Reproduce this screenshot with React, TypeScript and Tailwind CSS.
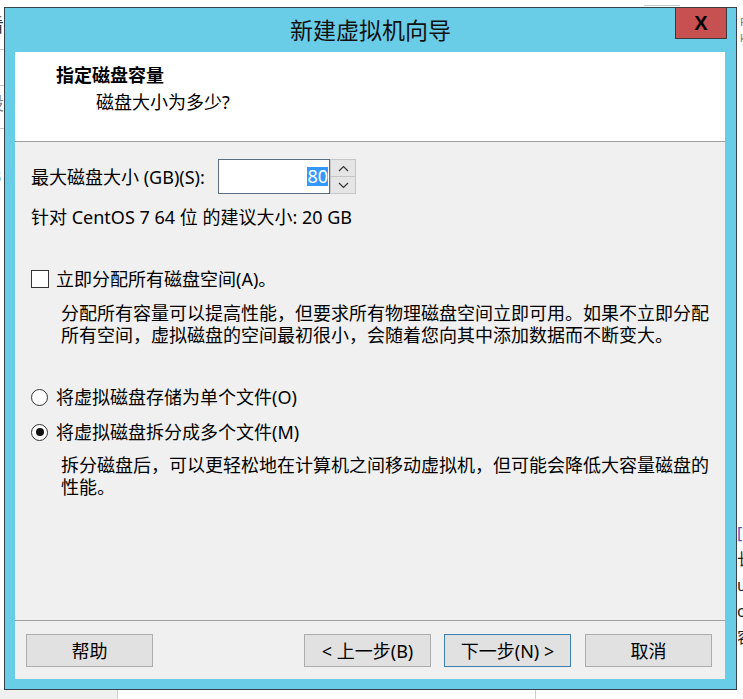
import React from 'react';

const Chevron = ({up}: {up?: boolean}) => (
  <svg width="11" height="7" viewBox="0 0 11 7" fill="none">
    <path
      d={up ? 'M1 6 L5.5 1.5 L10 6' : 'M1 1 L5.5 5.5 L10 1'}
      stroke="#333"
      strokeWidth="1.2"
    />
  </svg>
);

const Btn = ({label, active}: {label: string; active?: boolean}) => (
  <div
    className={`w-[127px] h-[33px] flex items-center justify-center bg-[#e1e1e1] border text-[18px] leading-none ${
      active ? 'border-[#3c7fb1]' : 'border-[#adadad]'
    }`}
  >
    {label}
  </div>
);

export default function App() {
  return (
    <div className="relative w-[743px] h-[699px] overflow-hidden bg-white text-black font-['Noto_Sans','Noto_Sans_CJK_SC',sans-serif]">
      {/* desktop behind the dialog */}
      <div className="absolute left-[-14px] top-[12px] text-[18px] text-[#333]">看</div>
      <div className="absolute left-0 top-[49px] w-[6px] h-px bg-[#c8c8c8]" />
      <div className="absolute left-0 top-[85px] w-[6px] h-px bg-[#c8c8c8]" />
      <div className="absolute left-[-14px] top-[90px] text-[18px] text-[#888]">设</div>
      <div className="absolute left-0 top-[128px] w-[6px] h-px bg-[#c8c8c8]" />
      <div className="absolute left-[-9px] top-[163px] text-[18px] text-[#333]">3</div>
      <div className="absolute left-[644px] top-[5px] w-[36px] h-px bg-[#c0c8d0]" />
      <div className="absolute left-[740px] top-[14px] text-[11px] text-[#777] leading-[16px]">
        P<br />k
      </div>
      <div className="absolute left-[737px] top-[520px] text-[16px] text-[#222] leading-[26px]">
        <span className="text-[#5a4cbb]">[</span>
        <br />长<br />ul<br />or<br />容
      </div>
      <div className="absolute left-0 top-[690px] w-[118px] h-[9px] bg-[#f0f0f0] border-r border-[#cfcfcf]" />
      <div className="absolute left-[535px] top-[690px] w-px h-[9px] bg-[#cfcfcf]" />

      {/* dialog */}
      <div className="absolute left-[4px] top-[7px] w-[733px] h-[683px] border border-[#34434c] bg-[#6acde8] flex flex-col">
        <div className="relative h-[44px] shrink-0 flex items-center justify-center">
          <span className="text-[23px] leading-none text-[#111]">新建虚拟机向导</span>
          <div className="absolute right-[9px] top-[-1px] w-[52px] h-[32px] bg-[#c75050] border border-[#3b3b3b] flex items-center justify-center">
            <span className="font-['Liberation_Sans',sans-serif] font-bold text-[20px] leading-none">X</span>
          </div>
        </div>

        <div className="ml-[10px] mr-[11px] flex-1 flex flex-col bg-[#f0f0f0] text-[18px] leading-[22px]">
          <div className="h-[90px] shrink-0 bg-white border-b border-[#a0a0a0] pt-[12px] pl-[41px]">
            <div className="font-bold">指定磁盘容量</div>
            <div className="pl-[40px] mt-[5px]">磁盘大小为多少?</div>
          </div>

          <div className="flex-1 flex flex-col px-[16px]">
            <div className="mt-[17px] h-[35px] flex items-center">
              <span className="w-[187px]">最大磁盘大小 (GB)(S):</span>
              <div className="w-[112px] h-[35px] border border-[#5b6f80] bg-white flex items-center justify-end pr-[1px]">
                <span className="bg-[#3399ff] text-white leading-[19px]">80</span>
              </div>
              <div className="w-[26px] h-[35px] flex flex-col">
                <div className="flex-1 bg-[#e5e5e5] border border-[#c6c6c6] flex items-center justify-center">
                  <Chevron up />
                </div>
                <div className="flex-1 bg-[#e5e5e5] border border-t-0 border-[#c6c6c6] flex items-center justify-center">
                  <Chevron />
                </div>
              </div>
            </div>

            <div className="mt-[12px]">针对 CentOS 7 64 位 的建议大小: 20 GB</div>

            <div className="mt-[40px] flex items-center">
              <div className="w-[18px] h-[18px] border border-[#333] bg-white" />
              <span className="ml-[7px]">立即分配所有磁盘空间(A)。</span>
            </div>
            <div className="mt-[12px] pl-[30px] w-[682px]">
              分配所有容量可以提高性能，但要求所有物理磁盘空间立即可用。如果不立即分配所有空间，虚拟磁盘的空间最初很小，会随着您向其中添加数据而不断变大。
            </div>

            <div className="mt-[40px] flex items-center">
              <div className="w-[17px] h-[17px] rounded-full border border-[#333] bg-white" />
              <span className="ml-[8px]">将虚拟磁盘存储为单个文件(O)</span>
            </div>
            <div className="mt-[13px] flex items-center">
              <div className="w-[17px] h-[17px] rounded-full border border-[#333] bg-white flex items-center justify-center">
                <div className="w-[8px] h-[8px] rounded-full bg-[#111]" />
              </div>
              <span className="ml-[8px]">将虚拟磁盘拆分成多个文件(M)</span>
            </div>
            <div className="mt-[11px] pl-[30px] w-[682px]">
              拆分磁盘后，可以更轻松地在计算机之间移动虚拟机，但可能会降低大容量磁盘的性能。
            </div>
          </div>

          <div className="h-[59px] shrink-0 border-t border-[#a0a0a0] pt-[13px] pl-[11px] pr-[13px] flex items-start">
            <Btn label="帮助" />
            <div className="flex-1" />
            <Btn label="< 上一步(B)" />
            <div className="w-[13px]" />
            <Btn label="下一步(N) >" active />
            <div className="w-[14px]" />
            <Btn label="取消" />
          </div>
        </div>

        <div className="h-[10px] shrink-0" />
      </div>
    </div>
  );
}
